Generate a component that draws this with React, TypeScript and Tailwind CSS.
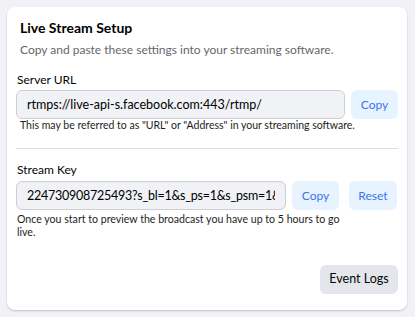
import React from "react";

const font = { fontFamily: 'Lato, "Noto Sans", Arial, sans-serif' };

function SoftButton({ label, className = "" }: { label: string; className?: string }) {
  return (
    <button
      className={`flex h-[29px] shrink-0 items-center justify-center rounded-md bg-[#e7f3ff] text-[12px] text-[#3b76ea] ${className}`}
    >
      {label}
    </button>
  );
}

function Field({ value, className = "" }: { value: string; className?: string }) {
  return (
    <input
      readOnly
      value={value}
      className={`h-[29px] min-w-0 rounded-md border border-[#ccd0d5] bg-[#f0f2f5] px-[10px] text-[12.5px] text-black outline-none ${className}`}
    />
  );
}

export default function App() {
  return (
    <div className="min-h-screen bg-[#f0f2f5] p-[7px]" style={font}>
      <div className="flex w-[400px] flex-col rounded-lg bg-white px-[9px] pt-[11px] pb-[16px] shadow-[0_1px_2px_rgba(0,0,0,0.2)]">
        {/* Heading */}
        <div className="px-[4px]">
          <h1 className="text-[14px] leading-[20px] font-bold text-black">Live Stream Setup</h1>
          <p className="mt-[4px] text-[12px] leading-[16px] text-[#65676b]">
            Copy and paste these settings into your streaming software.
          </p>
        </div>

        {/* Server URL */}
        <label className="mt-[14px] pl-[1px] text-[12px] leading-[16px] text-[#050505]">Server URL</label>
        <div className="mt-[2px] flex gap-[6px]">
          <Field value="rtmps://live-api-s.facebook.com:443/rtmp/" className="flex-1" />
          <SoftButton label="Copy" className="w-[47px]" />
        </div>
        <p className="pl-[4px] text-[10.5px] leading-[13px] text-[#1c1e21]">
          This may be referred to as "URL" or "Address" in your streaming software.
        </p>

        <hr className="mt-[16px] border-t border-[#dadde1]" />

        {/* Stream Key */}
        <label className="mt-[13px] pl-[1px] text-[12px] leading-[16px] text-[#050505]">Stream Key</label>
        <div className="mt-[3px] flex items-center">
          <Field
            value="224730908725493?s_bl=1&s_ps=1&s_psm=1&s_sw=0&s_vt=api-s&a=Abw"
            className="w-[270px] shrink-0 tracking-[-0.25px]"
          />
          <SoftButton label="Copy" className="ml-[6px] w-[47px]" />
          <SoftButton label="Reset" className="ml-[10px] w-[48px]" />
        </div>
        <p className="mt-[3px] w-[335px] pl-[1px] text-[10.6px] leading-[13px] text-[#1c1e21]">
          Once you start to preview the broadcast you have up to 5 hours to go live.
        </p>

        <div className="mt-[26px] flex justify-end">
          <button className="flex h-[29px] w-[78px] items-center justify-center rounded-md bg-[#e4e6eb] text-[12.5px] text-[#050505]">
            Event Logs
          </button>
        </div>
      </div>
    </div>
  );
}
